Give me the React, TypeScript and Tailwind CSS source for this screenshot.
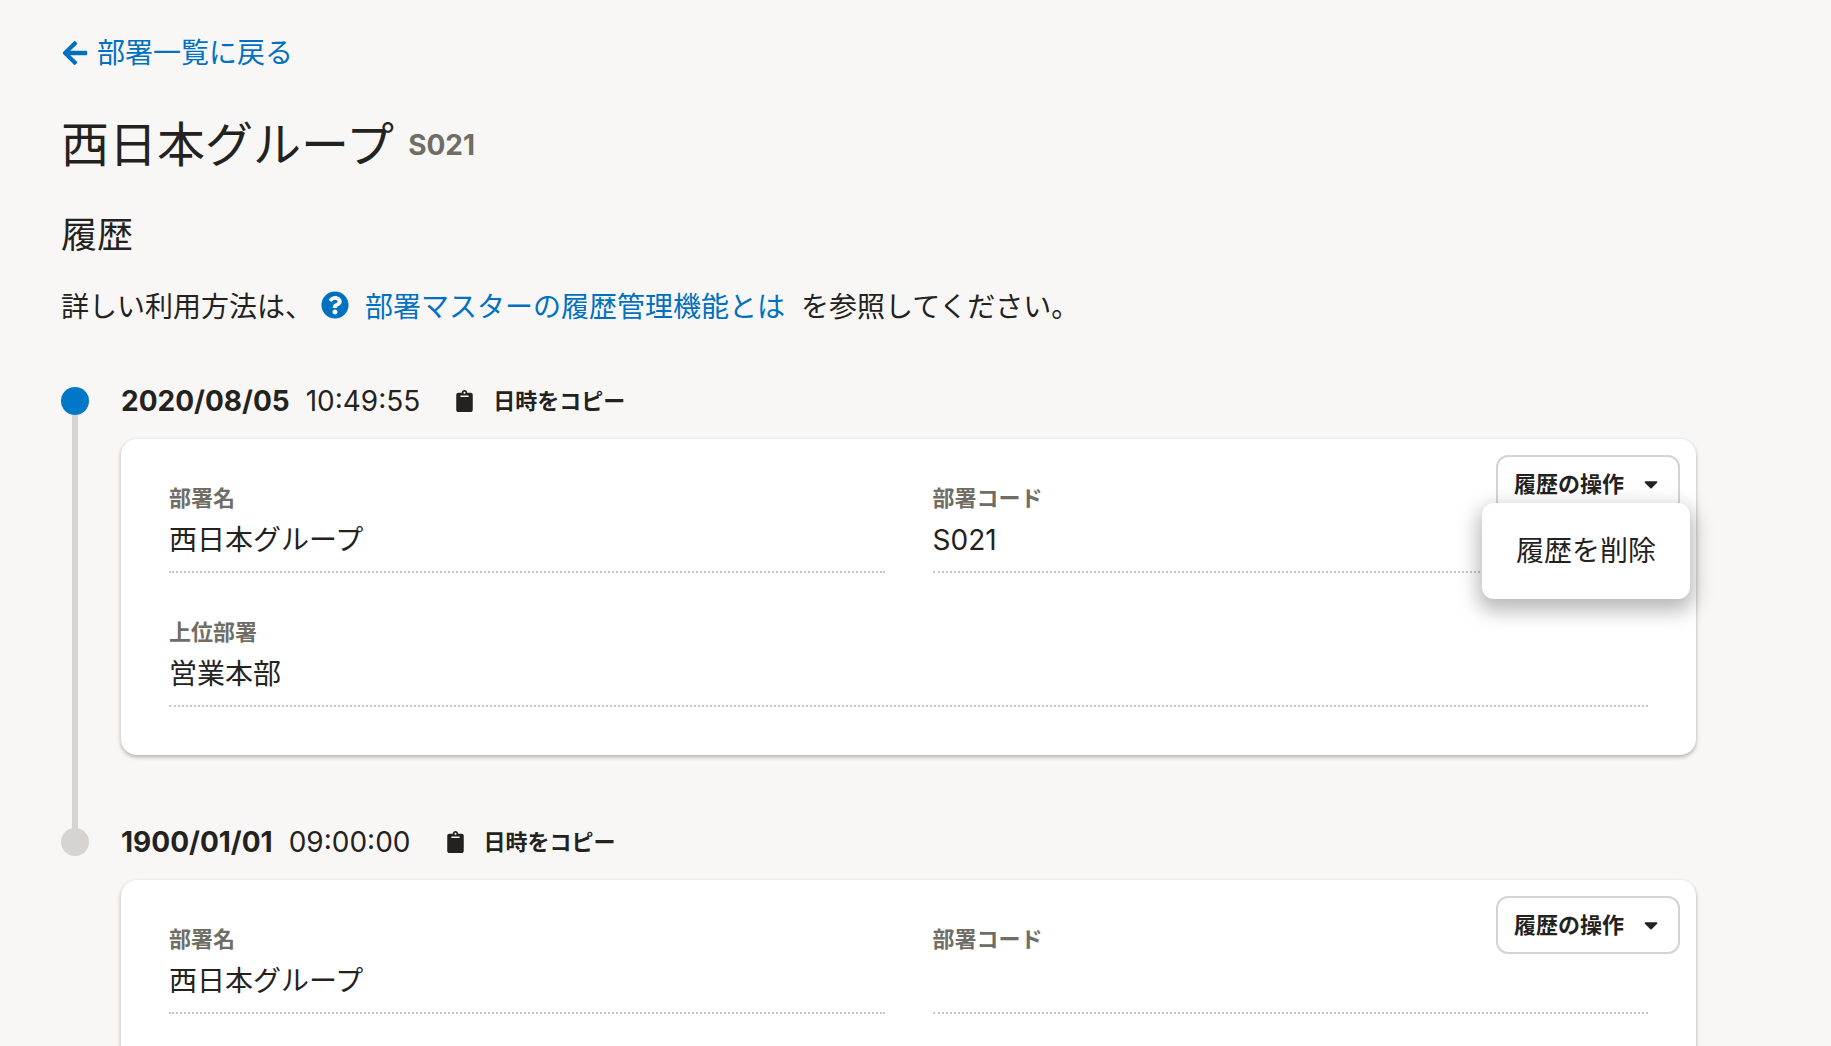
import { useState } from "react";
import { FaArrowLeft, FaCaretDown, FaClipboard, FaQuestionCircle } from "react-icons/fa";
import clsx from "clsx";

interface Field {
  label: string;
  value: string;
  wide?: boolean;
}

interface History {
  id: number;
  date: string;
  time: string;
  fields: Field[];
}

const histories: History[] = [
  {
    id: 2,
    date: "2020/08/05",
    time: "10:49:55",
    fields: [
      { label: "部署名", value: "西日本グループ" },
      { label: "部署コード", value: "S021" },
      { label: "上位部署", value: "営業本部", wide: true },
    ],
  },
  {
    id: 1,
    date: "1900/01/01",
    time: "09:00:00",
    fields: [
      { label: "部署名", value: "西日本グループ" },
      { label: "部署コード", value: "" },
    ],
  },
];

interface HistoryMenuProps {
  open: boolean;
  onToggle: () => void;
}

function HistoryMenu({ open, onToggle }: HistoryMenuProps) {
  return (
    <div className="absolute top-4 right-4">
      <button
        type="button"
        aria-haspopup="menu"
        aria-expanded={open}
        onClick={onToggle}
        className="flex h-[58px] items-center gap-5 rounded-xl border-2 border-[#d6d3d0] bg-white pr-5 pl-4 text-[22px] leading-none font-bold"
      >
        履歴の操作
        <FaCaretDown className="h-[22px] w-[14px]" />
      </button>

      {open && (
        <div
          role="menu"
          className="absolute top-12 -right-[10px] z-10 rounded-xl bg-white py-4 shadow-[0_8px_20px_4px_rgba(3,3,2,0.28)]"
        >
          <button
            type="button"
            role="menuitem"
            className="block h-16 px-[34px] leading-none whitespace-nowrap"
          >
            履歴を削除
          </button>
        </div>
      )}
    </div>
  );
}

interface HistoryItemProps extends HistoryMenuProps {
  history: History;
  current: boolean;
  last: boolean;
}

function HistoryItem({ history, current, last, open, onToggle }: HistoryItemProps) {
  return (
    <li className="flex gap-8">
      {/* Timeline marker */}
      <div className="flex w-7 shrink-0 flex-col items-center">
        <span
          className={clsx("size-7 shrink-0 rounded-full", current ? "bg-[#0077c7]" : "bg-[#d6d3d0]")}
        />
        {!last && <span className="w-[6px] grow bg-[#d6d3d0]" />}
      </div>

      <div className={clsx("grow", !last && "pb-[73px]")}>
        <div className="flex h-7 items-center">
          <h3 className="flex items-center gap-4 leading-none">
            <span className="font-bold">{history.date}</span>
            <span>{history.time}</span>
          </h3>
          <button
            type="button"
            className="ml-9 flex items-center gap-5 text-[22px] leading-none font-bold"
          >
            <FaClipboard className="h-[22px] w-[17px]" />
            日時をコピー
          </button>
        </div>

        <div className="relative mt-6 rounded-2xl bg-white p-12 shadow-[0_2px_4px_rgba(3,3,2,0.3)]">
          <dl className="grid grid-cols-2 gap-12">
            {history.fields.map((field) => (
              <div
                key={field.label}
                className={clsx(
                  "border-b-2 border-dotted border-[#c8c5c1] pb-2",
                  field.wide && "col-span-2",
                )}
              >
                <dt className="text-[22px] leading-[22px] font-bold text-[#706d65]">{field.label}</dt>
                <dd className="mt-2 h-[46px] leading-[46px]">{field.value}</dd>
              </div>
            ))}
          </dl>
          <HistoryMenu open={open} onToggle={onToggle} />
        </div>
      </div>
    </li>
  );
}

export default function App() {
  const [openId, setOpenId] = useState<number | null>(2);

  return (
    <div className="h-screen overflow-hidden bg-[#f8f7f6] font-[Inter,'Noto_Sans_CJK_JP',sans-serif] text-[28px] text-[#23221e]">
      <main className="pt-8 pr-[135px] pl-[61px]">
        <a href="#departments" className="inline-flex h-[42px] items-center gap-2 leading-none text-[#0071c1]">
          <FaArrowLeft className="h-7 w-7" />
          部署一覧に戻る
        </a>

        <div className="mt-[31px] flex h-[72px] items-center gap-[14px]">
          <h1 className="text-[48px] leading-none">西日本グループ</h1>
          <span className="leading-none font-bold text-[#706d65]">S021</span>
        </div>

        <h2 className="mt-7 text-[36px] leading-[52px]">履歴</h2>

        <p className="mt-6 flex h-11 items-center leading-none">
          詳しい利用方法は、
          <a href="#help" className="mr-4 ml-2 flex items-center gap-4 text-[#0071c1]">
            <FaQuestionCircle className="mb-1 size-7" />
            部署マスターの履歴管理機能とは
          </a>
          を参照してください。
        </p>

        <ol className="mt-[58px]">
          {histories.map((history, index) => (
            <HistoryItem
              key={history.id}
              history={history}
              current={index === 0}
              last={index === histories.length - 1}
              open={openId === history.id}
              onToggle={() => setOpenId(openId === history.id ? null : history.id)}
            />
          ))}
        </ol>
      </main>
    </div>
  );
}
